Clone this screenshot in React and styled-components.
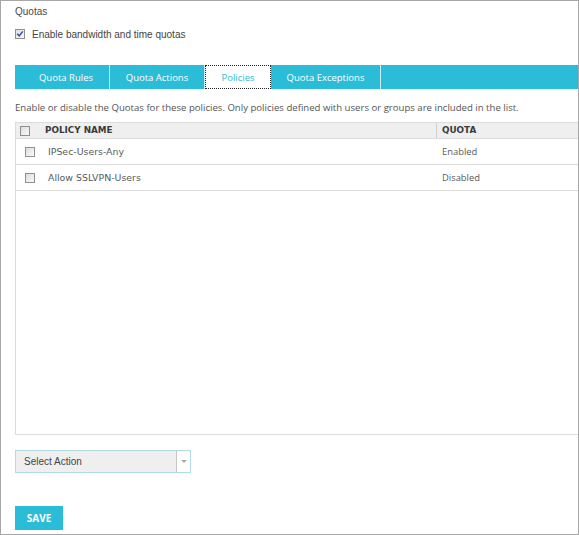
import React from 'react'
import styled, { createGlobalStyle } from 'styled-components'

const Global = createGlobalStyle`
  html, body { margin: 0; padding: 0; background: #fff; }
`

const TEAL = '#2bbcd7'

const Frame = styled.div`
  width: 579px;
  height: 535px;
  box-sizing: border-box;
  border: 1px solid #a7a7a7;
  padding-left: 14px;
  background: #fff;
  overflow: hidden;
  display: flex;
  flex-direction: column;
  font-family: "Liberation Sans", Arial, sans-serif;
`

const Title = styled.div`
  margin-top: 4px;
  height: 14px;
  line-height: 14px;
  font-size: 10px;
  color: #4a4a4a;
`

const CheckRow = styled.label`
  margin-top: 8px;
  height: 14px;
  display: flex;
  align-items: center;
  gap: 7px;
  font-size: 10px;
  color: #444;
`

const Tabs = styled.div`
  margin-top: 24px;
  height: 24px;
  background: ${TEAL};
  display: flex;
`

const Tab = styled.div`
  box-sizing: border-box;
  width: ${p => p.$w}px;
  height: 24px;
  display: flex;
  align-items: center;
  justify-content: center;
  padding-left: ${p => p.$shift || 0}px;
  font-family: "Open Sans", sans-serif;
  font-size: 9.5px;
  color: ${p => (p.$active ? TEAL : '#fff')};
  background: ${p => (p.$active ? '#fff' : 'transparent')};
  border: ${p => (p.$active ? '1px dotted #222' : 'none')};
  border-right: ${p => (p.$active ? '1px dotted #222' : '1px solid rgba(255,255,255,0.75)')};
`

const Desc = styled.div`
  margin-top: 13px;
  height: 12px;
  line-height: 12px;
  font-family: "Open Sans", sans-serif;
  font-size: 9.6px;
  color: #555;
  white-space: nowrap;
`

const Table = styled.div`
  margin-top: 8px;
  height: 313px;
  box-sizing: border-box;
  border: 1px solid #dcdcdc;
  border-right: none;
  display: flex;
  flex-direction: column;
`

const Row = styled.div`
  display: grid;
  grid-template-columns: ${p => (p.$head ? '29px 391px 1fr' : '32px 388px 1fr')};
  align-items: center;
  height: ${p => (p.$head ? 15 : 25)}px;
  border-bottom: 1px solid #dcdcdc;
  background: ${p => (p.$head ? '#efefef' : '#fff')};
`

const BoxCell = styled.div`
  display: flex;
  padding-left: ${p => (p.$head ? 4 : 9)}px;
`

const HeadCell = styled.div`
  font-family: "DejaVu Sans", Verdana, sans-serif;
  font-weight: bold;
  font-size: 8.8px;
  color: #3a3a3a;
  height: 15px;
  line-height: 15px;
  padding-left: ${p => (p.$divider ? 5 : 0)}px;
  border-left: ${p => (p.$divider ? '1px solid #cfcfcf' : 'none')};
`

const NameCell = styled.div`
  font-family: "DejaVu Sans", Verdana, sans-serif;
  font-size: 9.4px;
  color: #5a5a5a;
`

const QuotaCell = styled.div`
  font-family: "Open Sans", sans-serif;
  font-size: 9.4px;
  color: #5a5a5a;
  padding-left: 6px;
`

const Select = styled.div`
  margin-top: 15px;
  width: 176px;
  height: 23px;
  box-sizing: border-box;
  border: 1px solid #b3dbe6;
  background: #efefef;
  display: flex;
  align-items: stretch;
`

const SelectLabel = styled.div`
  flex: 1;
  display: flex;
  align-items: center;
  padding-left: 8px;
  font-size: 10px;
  color: #444;
`

const Arrow = styled.div`
  width: 13px;
  background: #fff;
  border-left: 1px solid #c7c7c7;
  display: flex;
  align-items: center;
  justify-content: center;
  &::after {
    content: '';
    border-left: 3px solid transparent;
    border-right: 3px solid transparent;
    border-top: 3px solid #aaa;
  }
`

const SaveButton = styled.button`
  margin-top: 33px;
  width: 48px;
  height: 24px;
  border: none;
  padding: 0;
  background: ${TEAL};
  color: #fff;
  font-family: "Open Sans", sans-serif;
  font-weight: bold;
  font-size: 10px;
`

function Check({ checked }) {
  return (
    <svg width="10" height="10" viewBox="0 0 10 10">
      <defs>
        <linearGradient id="cbg" x1="0" y1="0" x2="1" y2="1">
          <stop offset="0" stopColor="#dcdcdc" />
          <stop offset="1" stopColor="#fbfbfb" />
        </linearGradient>
      </defs>
      <rect x="0.5" y="0.5" width="9" height="9" fill="url(#cbg)" stroke="#8f8f8f" />
      {checked && (
        <path d="M2.3 4.8 L4.2 6.9 L7.8 2.4" fill="none" stroke="#2a48b8" strokeWidth="1.5" />
      )}
    </svg>
  )
}

const policies = [
  { name: 'IPSec-Users-Any', quota: 'Enabled' },
  { name: 'Allow SSLVPN-Users', quota: 'Disabled' },
]

const tabs = [
  { label: 'Quota Rules', w: 95, shift: 8 },
  { label: 'Quota Actions', w: 95 },
  { label: 'Policies', w: 66, active: true },
  { label: 'Quota Exceptions', w: 110 },
]

export default function App() {
  return (
    <>
      <Global />
      <Frame>
        <Title>Quotas</Title>
        <CheckRow>
          <Check checked />
          Enable bandwidth and time quotas
        </CheckRow>
        <Tabs>
          {tabs.map(t => (
            <Tab key={t.label} $w={t.w} $shift={t.shift} $active={t.active}>{t.label}</Tab>
          ))}
        </Tabs>
        <Desc>
          Enable or disable the Quotas for these policies. Only policies defined with users or groups are included in the list.
        </Desc>
        <Table>
          <Row $head>
            <BoxCell $head><Check /></BoxCell>
            <HeadCell>POLICY NAME</HeadCell>
            <HeadCell $divider>QUOTA</HeadCell>
          </Row>
          {policies.map(p => (
            <Row key={p.name}>
              <BoxCell><Check /></BoxCell>
              <NameCell>{p.name}</NameCell>
              <QuotaCell>{p.quota}</QuotaCell>
            </Row>
          ))}
        </Table>
        <Select>
          <SelectLabel>Select Action</SelectLabel>
          <Arrow />
        </Select>
        <SaveButton>SAVE</SaveButton>
      </Frame>
    </>
  )
}
